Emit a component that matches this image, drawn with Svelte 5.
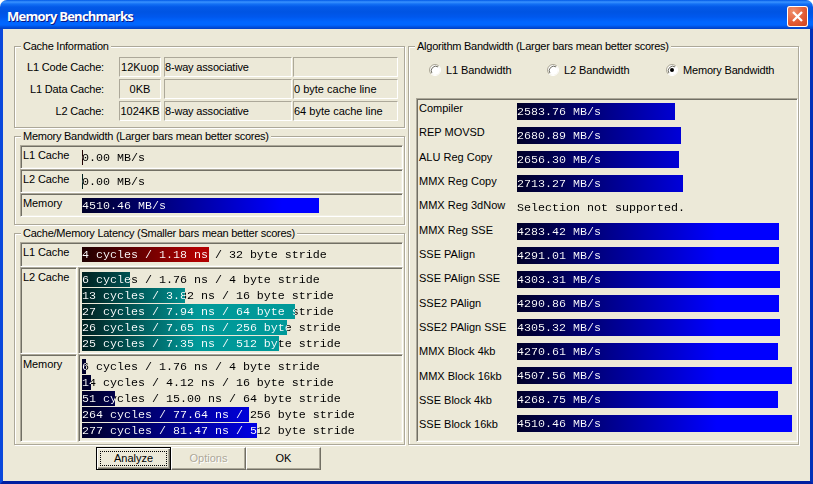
<script lang="ts">
	type Bar = { text: string; width: number };

	const caches = [
		{ label: 'L1 Code Cache:', size: '12Kuop', assoc: '8-way associative', line: '' },
		{ label: 'L1 Data Cache:', size: '0KB', assoc: '', line: '0 byte cache line' },
		{ label: 'L2 Cache:', size: '1024KB', assoc: '8-way associative', line: '64 byte cache line' }
	];

	const bandwidth = [
		{ label: 'L1 Cache', color: 'red', text: '0.00 MB/s', width: 1 },
		{ label: 'L2 Cache', color: 'teal', text: '0.00 MB/s', width: 1 },
		{ label: 'Memory', color: 'blue', text: '4510.46 MB/s', width: 237 }
	];

	const l1Latency: Bar = { text: '4 cycles / 1.18 ns / 32 byte stride', width: 127 };

	const latency: { label: string; color: string; bars: Bar[] }[] = [
		{
			label: 'L2 Cache',
			color: 'teal',
			bars: [
				{ text: '6 cycles / 1.76 ns / 4 byte stride', width: 48 },
				{ text: '13 cycles / 3.82 ns / 16 byte stride', width: 103 },
				{ text: '27 cycles / 7.94 ns / 64 byte stride', width: 213 },
				{ text: '26 cycles / 7.65 ns / 256 byte stride', width: 205 },
				{ text: '25 cycles / 7.35 ns / 512 byte stride', width: 197 }
			]
		},
		{
			label: 'Memory',
			color: 'blue',
			bars: [
				{ text: '6 cycles / 1.76 ns / 4 byte stride', width: 4 },
				{ text: '14 cycles / 4.12 ns / 16 byte stride', width: 9 },
				{ text: '51 cycles / 15.00 ns / 64 byte stride', width: 33 },
				{ text: '264 cycles / 77.64 ns / 256 byte stride', width: 167 },
				{ text: '277 cycles / 81.47 ns / 512 byte stride', width: 175 }
			]
		}
	];

	const algorithms = [
		{ name: 'Compiler', score: 2583.76 },
		{ name: 'REP MOVSD', score: 2680.89 },
		{ name: 'ALU Reg Copy', score: 2656.3 },
		{ name: 'MMX Reg Copy', score: 2713.27 },
		{ name: 'MMX Reg 3dNow', score: 0 },
		{ name: 'MMX Reg SSE', score: 4283.42 },
		{ name: 'SSE PAlign', score: 4291.01 },
		{ name: 'SSE PAlign SSE', score: 4303.31 },
		{ name: 'SSE2 PAlign', score: 4290.86 },
		{ name: 'SSE2 PAlign SSE', score: 4305.32 },
		{ name: 'MMX Block 4kb', score: 4270.61 },
		{ name: 'MMX Block 16kb', score: 4507.56 },
		{ name: 'SSE Block 4kb', score: 4268.75 },
		{ name: 'SSE Block 16kb', score: 4510.46 }
	];

	const best = Math.max(...algorithms.map((a) => a.score));
	const modes = ['L1 Bandwidth', 'L2 Bandwidth', 'Memory Bandwidth'];
	let mode = $state('Memory Bandwidth');
</script>

<!-- text is white over the filled part and black past its end -->
{#snippet bar(text: string, width: number, color: string)}
	<div class="bar" style="--fill: {width}px">
		<div class="fill {color}"></div>
		<span>{text}</span>
	</div>
{/snippet}

<div class="window">
	<div class="titlebar">
		<h1>Memory Benchmarks</h1>
		<button class="close" aria-label="Close">
			<svg viewBox="0 0 21 21" width="21" height="21">
				<path d="M6 6l9 9M15 6l-9 9" stroke="#fff" stroke-width="2.3" fill="none" />
			</svg>
		</button>
	</div>

	<div class="client">
		<div class="left">
			<section class="group info">
				<h2>Cache Information</h2>
				{#each caches as c}
					<div class="cache-row">
						<span class="cache-label">{c.label}</span>
						<span class="field size">{c.size}</span>
						<span class="field assoc">{c.assoc}</span>
						<span class="field line">{c.line}</span>
					</div>
				{/each}
			</section>

			<section class="group bandwidth">
				<h2>Memory Bandwidth (Larger bars mean better scores)</h2>
				{#each bandwidth as b}
					<div class="sunken row">
						<span class="label">{b.label}</span>
						{@render bar(b.text, b.width, b.color)}
					</div>
				{/each}
			</section>

			<section class="group latency">
				<h2>Cache/Memory Latency (Smaller bars mean better scores)</h2>
				<div class="sunken row first">
					<span class="label">L1 Cache</span>
					{@render bar(l1Latency.text, l1Latency.width, 'red')}
				</div>
				{#each latency as l}
					<div class="split">
						<div class="sunken name"><span class="label">{l.label}</span></div>
						<div class="sunken bars">
							{#each l.bars as b}
								{@render bar(b.text, b.width, l.color)}
							{/each}
						</div>
					</div>
				{/each}
			</section>

			<div class="buttons">
				<button class="default"><span>Analyze</span></button>
				<button disabled>Options</button>
				<button>OK</button>
			</div>
		</div>

		<section class="group algo">
			<h2>Algorithm Bandwidth (Larger bars mean better scores)</h2>
			<div class="modes">
				{#each modes as m}
					<button class="mode" onclick={() => (mode = m)}>
						<svg width="12" height="12" viewBox="0 0 12 12">
							<circle cx="6" cy="6" r="5" fill="#fff" />
							<path d="M2.1 9.9A5.5 5.5 0 0 1 9.9 2.1" fill="none" stroke="#aca899" />
							<path d="M2.9 9.1A4.5 4.5 0 0 1 9.1 2.9" fill="none" stroke="#716f64" />
							<path d="M9.9 2.1A5.5 5.5 0 0 1 2.1 9.9" fill="none" stroke="#fff" />
							{#if mode === m}<circle cx="6" cy="6" r="2" />{/if}
						</svg>
						<span>{m}</span>
					</button>
				{/each}
			</div>
			<div class="sunken list">
				<div class="names">
					{#each algorithms as a}
						<span>{a.name}</span>
					{/each}
				</div>
				<div class="scores">
					{#each algorithms as a}
						{#if a.score}
							{@render bar(a.score.toFixed(2) + ' MB/s', Math.ceil((a.score / best) * 275), 'blue')}
						{:else}
							{@render bar('Selection not supported.', 0, 'blue')}
						{/if}
					{/each}
				</div>
			</div>
		</section>
	</div>
</div>

<style>
	:global(body) {
		margin: 0;
		background: #fff;
		overflow: hidden;
	}

	.window {
		box-sizing: border-box;
		width: 813px;
		height: 484px;
		display: flex;
		flex-direction: column;
		background: #ece9d8;
		border-radius: 7px 7px 0 0;
		overflow: hidden;
		font: 11px/13px 'Liberation Sans', Arial, sans-serif;
		letter-spacing: -0.1px;
		color: #000;
	}

	.titlebar {
		height: 29px;
		flex-shrink: 0;
		display: flex;
		align-items: center;
		justify-content: space-between;
		padding: 3px 5px 0 7px;
		box-sizing: border-box;
		background: linear-gradient(
			#0058e6 0,
			#3a93ff 2px,
			#1370f5 4px,
			#0359e8 7px,
			#0054e3 12px,
			#0058ee 17px,
			#0066ff 22px,
			#0066ff 25px,
			#0050df 27px,
			#0040c4 29px
		);
	}

	h1 {
		margin: 0;
		font: bold 13px/16px 'Open Sans', 'Noto Sans', sans-serif;
		letter-spacing: -0.75px;
		color: #fff;
		text-shadow: 1px 1px 0 #0a1883;
	}

	.close {
		padding: 0;
		width: 21px;
		height: 21px;
		border: 0;
		border-radius: 3px;
		background: radial-gradient(circle at 30% 25%, #f0906c, #e25a33 55%, #c9401a);
		box-shadow: inset 0 0 0 1px #fff;
	}

	.close svg {
		display: block;
	}

	.client {
		flex: 1;
		display: flex;
		gap: 3px;
		padding: 17px 11px 0;
		border: solid #0a48dc;
		border-width: 0 3px 3px;
		border-right-color: #0230b8;
		border-bottom-color: #001ea0;
	}

	.left {
		display: flex;
		flex-direction: column;
		gap: 8px;
		width: 391px;
	}

	.group {
		box-sizing: border-box;
		width: 391px;
		border: 1px solid #aca899;
		box-shadow:
			1px 1px 0 #fff,
			inset 1px 1px 0 #fff;
	}

	h2 {
		width: max-content;
		height: 13px;
		margin: -7px 0 0 6px;
		padding: 0 2px;
		background: #ece9d8;
		font: inherit;
		letter-spacing: -0.25px;
	}

	.info {
		height: 82px;
	}

	.info h2 {
		margin-bottom: 4px;
	}

	.cache-row {
		display: flex;
		height: 20px;
		margin-bottom: 2px;
		letter-spacing: -0.18px;
	}

	.cache-label {
		width: 89px;
		margin-right: 15px;
		line-height: 20px;
		text-align: right;
	}

	.field {
		box-sizing: border-box;
		border: 1px solid;
		border-color: #aca899 #fff #fff #aca899;
		line-height: 18px;
		white-space: nowrap;
	}

	.size {
		width: 42px;
		margin-right: 3px;
		text-align: center;
		letter-spacing: 0;
	}

	.assoc {
		width: 128px;
		margin-right: 1px;
	}

	.line {
		width: 105px;
		letter-spacing: 0;
	}

	.bandwidth {
		height: 89px;
	}

	.bandwidth h2,
	.latency h2 {
		margin-bottom: 2px;
	}

	.sunken {
		box-sizing: border-box;
		border: 1px solid;
		border-color: #aca899 #fff #fff #aca899;
		box-shadow:
			inset 1px 1px 0 #716f64,
			inset -1px -1px 0 #f1efe2;
	}

	.row {
		display: flex;
		width: 383px;
		height: 24px;
		margin-left: 5px;
		padding: 4px 0 0 2px;
	}

	.first {
		height: 25px;
	}

	.label {
		display: block;
		width: 59px;
		flex-shrink: 0;
		white-space: nowrap;
		margin-top: -1px;
	}

	.name .label {
		width: auto;
	}

	.bar {
		position: relative;
		flex: 1;
		height: 15px;
		font: 11.667px/17px 'Liberation Mono', 'Courier New', monospace;
		letter-spacing: 0;
		white-space: nowrap;
	}

	.bar span {
		position: relative;
		display: block;
		color: transparent;
		background: linear-gradient(90deg, #fff var(--fill), #000 var(--fill));
		background-clip: text;
		-webkit-background-clip: text;
	}

	.fill {
		position: absolute;
		top: 0;
		left: 0;
		width: var(--fill);
		height: 100%;
	}

	.red {
		background: linear-gradient(90deg, #200000, #b00000 115px);
	}

	.teal {
		background: linear-gradient(90deg, #002020, #009999 115px);
	}

	.blue {
		background: linear-gradient(90deg, #000028, #0000ff 200px);
	}

	.latency {
		height: 212px;
	}

	.split {
		display: flex;
		gap: 1px;
		margin-left: 5px;
		height: 87px;
	}

	.split + .split {
		height: 88px;
	}

	.name {
		width: 57px;
		padding: 4px 0 0 2px;
	}

	.bars {
		width: 325px;
		display: flex;
		flex-direction: column;
		gap: 1px;
		padding: 4px 0 0 3px;
	}

	.bars .bar {
		flex: none;
	}

	.buttons {
		display: flex;
		margin: -6px 0 0 82px;
	}

	.buttons button {
		width: 75px;
		height: 23px;
		padding: 0;
		border: 1px solid;
		border-color: #fff #716f64 #716f64 #fff;
		box-shadow: inset -1px -1px 0 #aca899;
		background: #ece9d8;
		font: inherit;
		color: #000;
	}

	.buttons button:disabled {
		color: #aca899;
		text-shadow: 1px 1px 0 #fff;
	}

	.buttons .default {
		border-color: #000;
		box-shadow:
			inset 1px 1px 0 #fff,
			inset -1px -1px 0 #716f64,
			inset -2px -2px 0 #aca899;
	}

	.default span {
		display: block;
		margin: 0 3px;
		border: 1px dotted #000;
	}

	.algo {
		height: 399px;
	}

	.modes {
		display: flex;
		margin: 10px 0 0 20px;
		height: 13px;
	}

	.mode {
		display: flex;
		align-items: center;
		gap: 5px;
		width: 118px;
		flex-shrink: 0;
		padding: 0;
		border: 0;
		background: none;
		font: inherit;
		letter-spacing: -0.1px;
		color: #000;
		white-space: nowrap;
	}

	.mode span {
		padding-top: 2px;
	}

	.mode:last-child {
		width: 112px;
		margin-left: 1px;
		letter-spacing: -0.18px;
	}

	.list {
		display: flex;
		width: 382px;
		height: 344px;
		margin: 22px 0 0 7px;
		padding: 4px 0 0 2px;
	}

	.names {
		width: 98px;
		margin-top: -1px;
		letter-spacing: 0;
	}

	/* the names run slightly wider apart than the bars */
	.names span {
		display: block;
		height: 24.33px;
	}

	.scores {
		flex: 1;
		display: flex;
		flex-direction: column;
		gap: 7px;
	}

	.scores .bar {
		flex: none;
		height: 17px;
		line-height: 18px;
	}
</style>
